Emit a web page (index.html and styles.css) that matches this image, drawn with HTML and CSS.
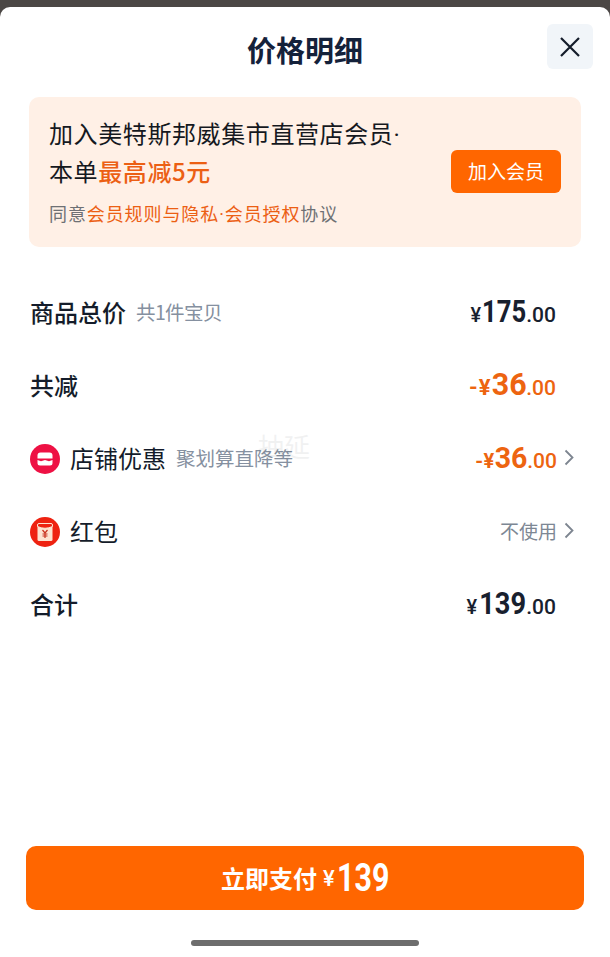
FILE: index.html
```html
<!DOCTYPE html>
<html lang="zh-CN">
<head>
    <meta charset="UTF-8">
    <meta name="viewport" content="width=device-width, initial-scale=1.0">
    <title>价格明细</title>
    <link rel="stylesheet" href="styles.css">
</head>

<body>
    <div class="sheet">
        <div class="sheet-head">
            <h2>价格明细</h2>
            <button class="close-btn" type="button" aria-label="关闭">
                <svg width="22" height="22" viewBox="0 0 22 22"><path d="M2 2L20 20M20 2L2 20" stroke="#141c2a" stroke-width="2.2" fill="none"/></svg>
            </button>
        </div>

        <div class="member-card">
            <div class="member-text">
                <p class="member-title">加入美特斯邦威集市直营店会员<span class="dot">·</span><br>本单<span class="accent heavy">最高减5元</span></p>
                <p class="member-note">同意<span class="accent">会员规则与隐私<span class="dot">·</span>会员授权</span>协议</p>
            </div>
            <button class="join-btn" type="button">加入会员</button>
        </div>

        <div class="price-list">
            <div class="row">
                <div class="row-left"><span class="label strong">商品总价</span><span class="sub tight">共1件宝贝</span></div>
                <div class="price"><span class="yen">¥</span><span class="big">175</span><span class="cents">.00</span></div>
            </div>
            <div class="row">
                <div class="row-left"><span class="label strong">共减</span></div>
                <div class="price orange"><span class="yen minus">-¥</span><span class="big two">36</span><span class="cents">.00</span></div>
            </div>
            <div class="row">
                <div class="row-left">
                    <svg class="row-icon" width="30" height="30" viewBox="0 0 30 30">
                        <circle cx="15" cy="15" r="15" fill="#ee1144"/>
                        <path d="M7.500 14.500V11.500Q7.500 8.500 10.500 8.500H19.500Q22.500 8.500 22.500 11.500V14.500Z" fill="#fff"/>
                        <path d="M7.500 16L11 17.200L15 16L19 17.200L22.500 16V19Q22.500 21.500 20 21.500H10Q7.500 21.500 7.500 19Z" fill="#fff"/>
                    </svg>
                    <span class="label">店铺优惠</span><span class="sub">聚划算直降等</span>
                </div>
                <div class="price orange with-arrow"><span class="yen minus narrow">-¥</span><span class="big two small">36</span><span class="cents">.00</span>
                    <svg class="arrow" width="10" height="17" viewBox="0 0 10 17"><path d="M1.500 1.500L8.500 8.500L1.500 15.500" stroke="#7d8590" stroke-width="1.800" fill="none"/></svg>
                </div>
            </div>
            <div class="row">
                <div class="row-left">
                    <svg class="row-icon" width="30" height="30" viewBox="0 0 30 30">
                        <circle cx="15" cy="15" r="15" fill="#ee2211"/>
                        <rect x="7.500" y="6.500" width="15" height="17.500" rx="1.500" fill="#fde3d0"/>
                        <path d="M7.500 8Q7.500 6.500 9 6.500H21Q22.500 6.500 22.500 8V9.500Q15 13 7.500 9.500Z" fill="#ee2211" stroke="#fde3d0" stroke-width="1"/>
                        <path d="M12.500 13L15 16L17.500 13M15 16V21M12.500 17H17.500M12.500 19H17.500" stroke="#c8321e" stroke-width="1.200" fill="none"/>
                    </svg>
                    <span class="label">红包</span>
                </div>
                <div class="price with-arrow"><span class="unused">不使用</span>
                    <svg class="arrow" width="10" height="17" viewBox="0 0 10 17"><path d="M1.500 1.500L8.500 8.500L1.500 15.500" stroke="#7d8590" stroke-width="1.800" fill="none"/></svg>
                </div>
            </div>
            <div class="row">
                <div class="row-left"><span class="label strong">合计</span></div>
                <div class="price"><span class="yen spaced">¥</span><span class="big wide">139</span><span class="cents">.00</span></div>
            </div>
        </div>

        <div class="sheet-foot">
            <button class="pay-btn" type="button"><span class="pay-label">立即支付</span><span class="pay-yen">¥</span><span class="pay-num">139</span></button>
            <div class="home-bar"></div>
        </div>
    </div>
    <span class="watermark">抽延</span>
</body>
</html>
```

FILE: styles.css
```css
* {
    box-sizing: border-box;
}

html, body {
    height: 100%;
}

body {
    margin: 0;
    padding-top: 7px;
    background: #4b4745;
    font-family: "Noto Sans CJK SC", "Noto Sans", sans-serif;
    color: #141c2a;
    overflow: hidden;
}

p, h2 {
    margin: 0;
}

button {
    border: none;
    padding: 0;
    font-family: inherit;
    cursor: pointer;
}

.sheet {
    height: 950px;
    background: white;
    border-radius: 10px 10px 0 0;
    display: flex;
    flex-direction: column;
    padding: 0 29px;
}

/* Header */
.sheet-head {
    height: 90px;
    display: flex;
    justify-content: center;
    align-items: flex-start;
    position: relative;
}

.sheet-head h2 {
    font-size: 29px;
    font-weight: 700;
    line-height: 40px;
    margin-top: 22px;
    color: #14213a;
}

.close-btn {
    position: absolute;
    top: 17px;
    right: -12px;
    width: 46px;
    height: 45px;
    background: #f1f5f9;
    border-radius: 6px;
    display: flex;
    justify-content: center;
    align-items: center;
}

/* Member banner */
.member-card {
    height: 150px;
    background: #fff0e6;
    border-radius: 10px;
    padding: 18px 20px 0 20px;
    display: flex;
    justify-content: space-between;
}

.member-title {
    font-size: 24px;
    line-height: 36px;
    letter-spacing: 0.6px;
    color: #15181e;
}

.member-note {
    font-size: 18px;
    line-height: 26px;
    letter-spacing: 0.9px;
    margin-top: 11px;
    color: #6e7074;
}

.dot {
    font-family: Roboto, sans-serif;
}

.accent {
    color: #ec5f14;
}

.heavy {
    font-weight: 500;
}

.join-btn {
    width: 110px;
    height: 43px;
    margin-top: 35px;
    padding-bottom: 3px;
    background: #ff6600;
    color: #fff;
    font-size: 19px;
    border-radius: 6px;
}

/* Price rows */
.price-list {
    margin-top: 29px;
    padding-right: 5px;
}

.row {
    height: 73px;
    display: flex;
    justify-content: space-between;
    align-items: center;
    margin-left: 1px;
}

.row-left {
    display: flex;
    align-items: center;
}

.row-icon {
    margin-right: 10px;
}

.label {
    font-size: 24px;
    line-height: 34px;
    margin-bottom: 2px;
}

.label.strong {
    font-weight: 500;
}

.sub {
    font-size: 19.5px;
    margin-left: 10px;
    margin-bottom: 2px;
    color: #8590a0;
}

.sub.tight {
    letter-spacing: -0.6px;
}

.price {
    display: flex;
    align-items: baseline;
    padding-right: 20px;
    margin-bottom: 3px;
    font-family: Roboto, sans-serif;
    font-weight: 500;
    color: #18202e;
}

.price.with-arrow {
    padding-right: 2px;
}

.orange {
    color: #ed6410;
}

.yen {
    font-size: 20px;
}

.yen.spaced {
    margin-right: 2px;
}

.yen.minus {
    font-size: 22px;
    font-weight: 700;
    letter-spacing: 1px;
}

.yen.narrow {
    font-size: 20px;
    letter-spacing: 0.5px;
}

/* no condensed font installed, so the big digits are squeezed */
.big {
    display: inline-block;
    font-size: 32px;
    font-weight: 700;
    transform: scaleX(0.8);
    transform-origin: right;
    margin-left: -10px;
}

.big.wide {
    transform: scaleX(0.85);
    margin-left: -8px;
}

.big.two {
    transform: scaleX(0.95);
    margin-left: -2px;
}

.big.small {
    font-size: 30px;
}

.cents {
    font-size: 21px;
}

.unused {
    font-family: "Noto Sans CJK SC", sans-serif;
    font-size: 19px;
    font-weight: 400;
    color: #7d8794;
}

.arrow {
    margin-left: 7px;
    align-self: center;
}

.watermark {
    position: absolute;
    top: 427px;
    left: 258px;
    font-size: 26px;
    color: #18202e;
    opacity: 0.06;
}

/* Footer */
.sheet-foot {
    margin-top: auto;
    margin-left: -3px;
    margin-right: -3px;
    display: flex;
    flex-direction: column;
    align-items: center;
    padding-bottom: 11px;
}

.pay-btn {
    width: 100%;
    height: 64px;
    background: #ff6600;
    color: #fff;
    border-radius: 10px;
    display: flex;
    justify-content: center;
    align-items: center;
}

.pay-label {
    font-size: 24px;
    font-weight: 700;
    margin-bottom: 2px;
}

.pay-yen {
    font-family: Roboto, sans-serif;
    font-size: 22px;
    font-weight: 500;
    margin-left: 6px;
}

.pay-num {
    display: inline-block;
    font-family: Roboto, sans-serif;
    font-size: 38px;
    font-weight: 700;
    transform: scaleX(0.8);
    transform-origin: left;
    margin-left: 2px;
    margin-right: -13px;
}

.home-bar {
    width: 228px;
    height: 6px;
    margin-top: 30px;
    background: #6d6d6d;
    border-radius: 3px;
}
```
